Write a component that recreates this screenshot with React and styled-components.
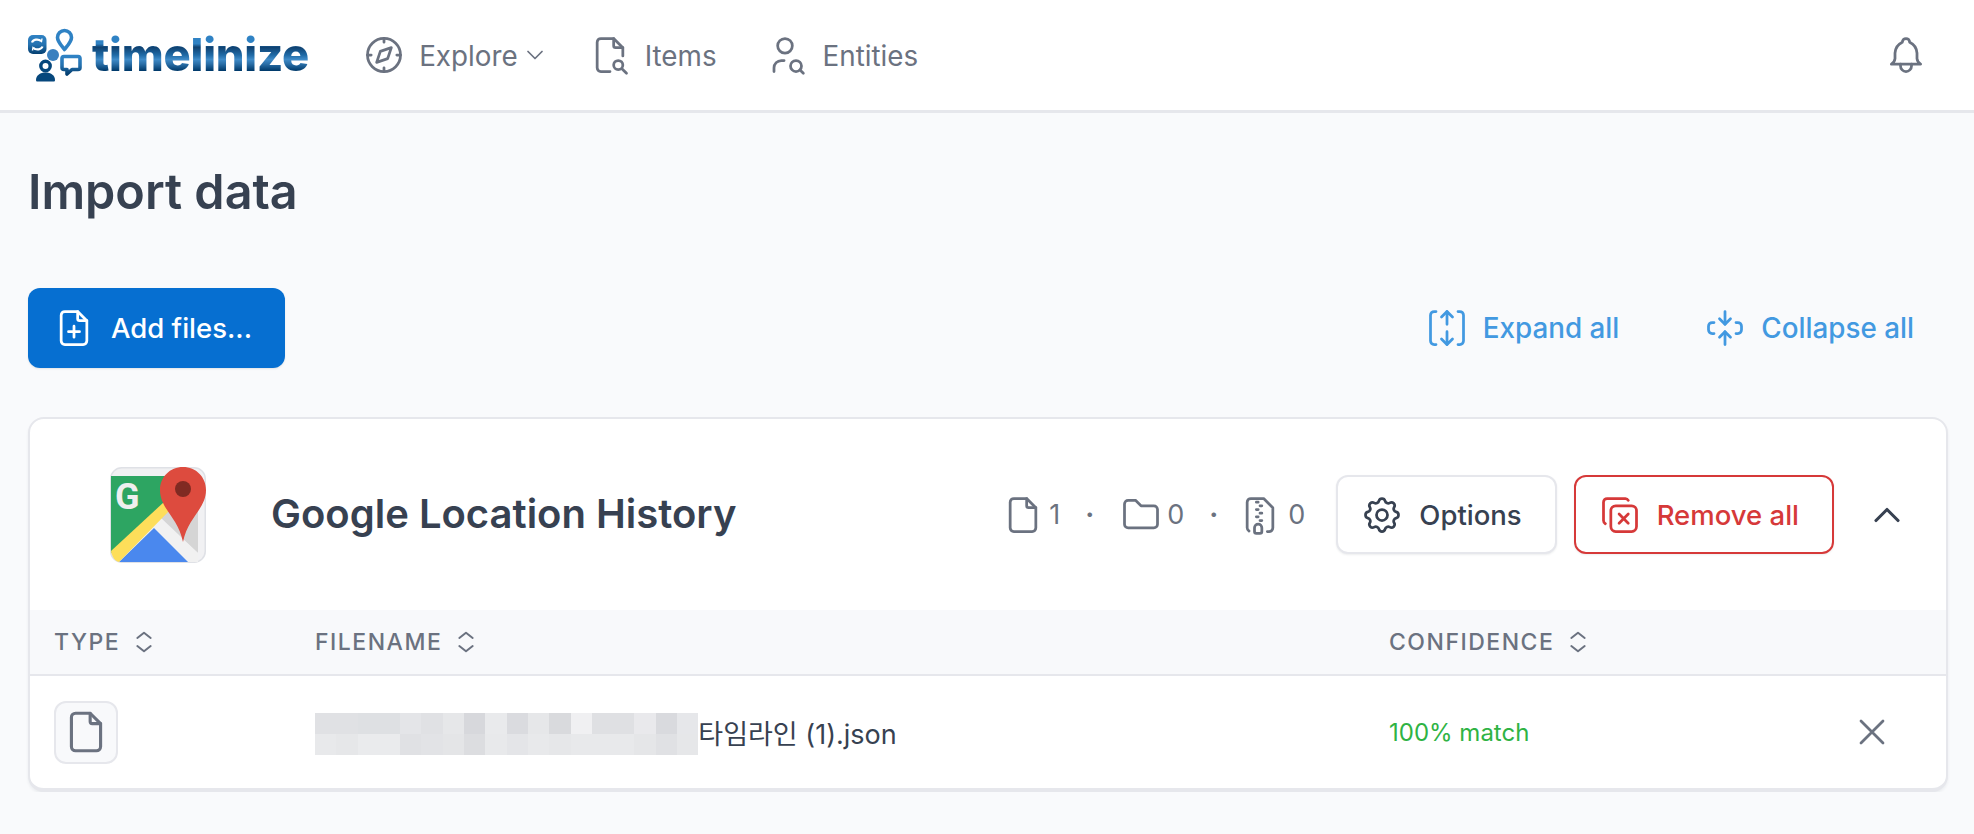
import React from "react";
import styled, { createGlobalStyle } from "styled-components";

const Icon = ({ size = 44, width = 1.5, children }) => (
    <IconSvg viewBox="0 0 24 24" $size={size} fill="none" stroke="currentColor" strokeWidth={width} strokeLinecap="round" strokeLinejoin="round">
        {children}
    </IconSvg>
);

const FileIcon = (props) => (
    <Icon {...props}>
        <path d="M14 3v4a1 1 0 0 0 1 1h4" />
        <path d="M17 21h-10a2 2 0 0 1 -2 -2v-14a2 2 0 0 1 2 -2h7l5 5v11a2 2 0 0 1 -2 2z" />
    </Icon>
);

const SortIcon = () => (
    <Icon size={32}>
        <path d="M7 9l5 -4l5 4" />
        <path d="M17 15l-5 4l-5 -4" />
    </Icon>
);

const LogoMark = () => (
    <svg width="54" height="56" viewBox="0 0 54 56" fill="none" style={{ flexShrink: 0 }}>
        <defs>
            <linearGradient id="markFill" x1="0" y1="0" x2="0" y2="1">
                <stop offset="0" stopColor="#2f82c4" />
                <stop offset="0.5" stopColor="#2572b0" />
                <stop offset="1" stopColor="#043f70" />
            </linearGradient>
        </defs>
        <rect x="0" y="8" width="18.500" height="19" rx="5" fill="url(#markFill)" />
        <path d="M4 15.500c1-3 6-4 9-1.500M14.500 19.500c-1 3-6 4-9 1.500" stroke="#fff" strokeWidth="2.200" />
        <path d="M11 12.500l2.500 2 .5-3M7.500 22.500l-2.500-2-.5 3" stroke="#fff" strokeWidth="1.400" />
        <path d="M36.500 22.500c-4-5-7-8-7-12a7 7 0 0 1 14 0c0 4-3 7-7 12z" stroke="#2f82c4" strokeWidth="3.600" strokeLinejoin="round" />
        <circle cx="25" cy="28" r="6" fill="#3a80bf" />
        <path d="M36 29.500h14a2 2 0 0 1 2 2v9a2 2 0 0 1-2 2h-6l-5 4.500v-4.500h-3a2 2 0 0 1-2-2v-9a2 2 0 0 1 2-2z" stroke="url(#markFill)" strokeWidth="3.600" strokeLinejoin="round" />
        <circle cx="17.500" cy="39" r="4.700" stroke="#06477c" strokeWidth="3.400" />
        <path d="M8 53c0-5 4.500-7.500 9.500-7.500s9.500 2.500 9.500 7.500c0 1-.5 1.500-1.500 1.500h-16c-1 0-1.500-.5-1.500-1.500z" fill="#06477c" />
    </svg>
);

const MapsLogo = () => (
    <svg width="96" height="96" viewBox="0 0 96 96" style={{ flexShrink: 0 }}>
        <rect x="0.75" y="0.75" width="94.500" height="94.500" rx="11" fill="#f1f1f3" stroke="#dfe1e6" strokeWidth="1.5" />
        <path d="M1 9H55V36L1 86z" fill="#2da562" />
        <text x="5" y="42" fontFamily="Roboto, sans-serif" fontWeight="700" fontSize="36" fill="#efefef">G</text>
        <path d="M60 38H88V86L50 50z" fill="#d5d5d5" />
        <path d="M48 50L88 86V95H78L42 60z" fill="#f1f1f1" />
        <path d="M44 61L78 95H9z" fill="#4a88ee" />
        <path d="M1 84L54 35L61 42L9 95C5 94 2 90 1 84z" fill="#fdde5a" />
        <path d="M73 0C60 0 50 10 50 23C50 42 68 50 73 75C78 50 96 42 96 23C96 10 86 0 73 0z" fill="#dd4b3e" />
        <circle cx="73" cy="22" r="8" fill="#802a22" />
    </svg>
);

const mosaic = [
    ["#e0e1e4", "#e8e9eb"], ["#e0e1e4", "#e6e7e9"], ["#dee0e3", "#eaebed"], ["#dee0e3", "#eaebed"],
    ["#e4e5e8", "#e0e1e4"], ["#e0e1e4", "#e2e3e6"], ["#e6e7e9", "#e4e5e7"], ["#d7d8dc", "#dcdde0"],
    ["#e9eaec", "#e8e9eb"], ["#dadbdf", "#e4e5e8"], ["#e6e7e9", "#e8e9eb"], ["#d9dadd", "#e6e7e9"],
    ["#f0f0f2", "#e8e9eb"], ["#dfe0e3", "#e8e9eb"], ["#dfe0e3", "#e8e9eb"], ["#e9e9ec", "#e5e6e8"],
    ["#d9dade", "#e0e1e4"], ["#e6e7ea", "#e6e7e9"],
];

const App = () => {
    return (
        <>
            <GlobalStyle />
            <Header>
                <Brand>
                    <LogoMark />
                    <Wordmark>timelinize</Wordmark>
                </Brand>
                <Nav>
                    <NavItem>
                        <Icon>
                            <path d="M8 16l2 -6l6 -2l-2 6l-6 2" />
                            <path d="M12 12m-9 0a9 9 0 1 0 18 0a9 9 0 1 0 -18 0" />
                            <path d="M12 3v2M12 19v2M3 12h2M19 12h2" />
                        </Icon>
                        <span>Explore</span>
                        <Caret>
                            <Icon size={28}><path d="M6 9l6 6l6 -6" /></Icon>
                        </Caret>
                    </NavItem>
                    <NavItem>
                        <Icon>
                            <path d="M14 3v4a1 1 0 0 0 1 1h4" />
                            <path d="M12 21h-5a2 2 0 0 1 -2 -2v-14a2 2 0 0 1 2 -2h7l5 5v4.500" />
                            <path d="M16.500 17.500m-2.500 0a2.500 2.500 0 1 0 5 0a2.500 2.500 0 1 0 -5 0" />
                            <path d="M18.500 19.500l2.500 2.500" />
                        </Icon>
                        <span>Items</span>
                    </NavItem>
                    <NavItem $wide>
                        <Icon>
                            <path d="M8 7a4 4 0 1 0 8 0a4 4 0 0 0 -8 0" />
                            <path d="M6 21v-2a4 4 0 0 1 4 -4h1.500" />
                            <path d="M18 18m-3 0a3 3 0 1 0 6 0a3 3 0 1 0 -6 0" />
                            <path d="M20.200 20.200l1.800 1.800" />
                        </Icon>
                        <span>Entities</span>
                    </NavItem>
                </Nav>
                <Bell>
                    <Icon>
                        <path d="M10 5a2 2 0 1 1 4 0a7 7 0 0 1 4 6v3a4 4 0 0 0 2 3h-16a4 4 0 0 0 2 -3v-3a7 7 0 0 1 4 -6" />
                        <path d="M9 17v1a3 3 0 0 0 6 0v-1" />
                    </Icon>
                </Bell>
            </Header>

            <Main>
                <Title>Import data</Title>

                <Toolbar>
                    <PrimaryButton>
                        <Icon>
                            <path d="M14 3v4a1 1 0 0 0 1 1h4" />
                            <path d="M17 21h-10a2 2 0 0 1 -2 -2v-14a2 2 0 0 1 2 -2h7l5 5v11a2 2 0 0 1 -2 2z" />
                            <path d="M12 11v6M9 14h6" />
                        </Icon>
                        Add files...
                    </PrimaryButton>
                    <LinkGroup>
                        <LinkButton>
                            <Icon>
                                <path d="M12 10v-7l3 3" />
                                <path d="M9 6l3 -3" />
                                <path d="M12 14v7l3 -3" />
                                <path d="M9 18l3 3" />
                                <path d="M18 3h1a2 2 0 0 1 2 2v14a2 2 0 0 1 -2 2h-1" />
                                <path d="M6 3h-1a2 2 0 0 0 -2 2v14a2 2 0 0 0 2 2h1" />
                            </Icon>
                            Expand all
                        </LinkButton>
                        <LinkButton>
                            <Icon>
                                <path d="M12 3v7l3 -3" />
                                <path d="M9 7l3 3" />
                                <path d="M12 21v-7l3 3" />
                                <path d="M9 17l3 -3" />
                                <path d="M18 9h1a2 2 0 0 1 2 2v2a2 2 0 0 1 -2 2h-1" />
                                <path d="M6 9h-1a2 2 0 0 0 -2 2v2a2 2 0 0 0 2 2h1" />
                            </Icon>
                            Collapse all
                        </LinkButton>
                    </LinkGroup>
                </Toolbar>

                <Card>
                    <CardHeader>
                        <MapsLogo />
                        <CardTitle>Google Location History</CardTitle>
                        <Stats>
                            <Stat $gap={4}>
                                <FileIcon />
                                <span>1</span>
                            </Stat>
                            <Dot>·</Dot>
                            <Stat $gap={4}>
                                <Icon>
                                    <path d="M5 4h4l3 3h7a2 2 0 0 1 2 2v8a2 2 0 0 1 -2 2h-14a2 2 0 0 1 -2 -2v-11a2 2 0 0 1 2 -2" />
                                </Icon>
                                <span>0</span>
                            </Stat>
                            <Dot>·</Dot>
                            <Stat $pull={5}>
                                <Icon>
                                    <path d="M6 20.735a2 2 0 0 1 -1 -1.735v-14a2 2 0 0 1 2 -2h7l5 5v11a2 2 0 0 1 -2 2h-1" />
                                    <path d="M11 17a2 2 0 0 1 2 2v2a1 1 0 0 1 -1 1h-2a1 1 0 0 1 -1 -1v-2a2 2 0 0 1 2 -2z" />
                                    <path d="M11 5h-1M13 7h-1M11 9h-1M13 11h-1M11 13h-1M13 15h-1" />
                                </Icon>
                                <span>0</span>
                            </Stat>
                        </Stats>
                        <OutlineButton>
                            <Icon>
                                <path d="M10.325 4.317c.426 -1.756 2.924 -1.756 3.350 0a1.724 1.724 0 0 0 2.573 1.066c1.543 -.94 3.310 .826 2.370 2.370a1.724 1.724 0 0 0 1.065 2.572c1.756 .426 1.756 2.924 0 3.350a1.724 1.724 0 0 0 -1.066 2.573c.94 1.543 -.826 3.310 -2.370 2.370a1.724 1.724 0 0 0 -2.572 1.065c-.426 1.756 -2.924 1.756 -3.350 0a1.724 1.724 0 0 0 -2.573 -1.066c-1.543 .94 -3.310 -.826 -2.370 -2.370a1.724 1.724 0 0 0 -1.065 -2.572c-1.756 -.426 -1.756 -2.924 0 -3.350a1.724 1.724 0 0 0 1.066 -2.573c-.94 -1.543 .826 -3.310 2.370 -2.370c1 .608 2.296 .07 2.572 -1.065z" />
                                <path d="M9 12a3 3 0 1 0 6 0a3 3 0 0 0 -6 0" />
                            </Icon>
                            Options
                        </OutlineButton>
                        <DangerButton>
                            <Icon>
                                <path d="M7 9.667a2.667 2.667 0 0 1 2.667 -2.667h8.666a2.667 2.667 0 0 1 2.667 2.667v8.666a2.667 2.667 0 0 1 -2.667 2.667h-8.666a2.667 2.667 0 0 1 -2.667 -2.667z" />
                                <path d="M4.012 16.737a2 2 0 0 1 -1.012 -1.737v-10c0 -1.100 .9 -2 2 -2h10c.75 0 1.158 .385 1.500 1" />
                                <path d="M11.500 11.500l4.993 4.993" />
                                <path d="M16.500 11.500l-5 5" />
                            </Icon>
                            Remove all
                        </DangerButton>
                        <Toggle>
                            <Icon size={44} width={1.7}><path d="M6 15l6 -6l6 6" /></Icon>
                        </Toggle>
                    </CardHeader>

                    <TableHead>
                        <HeadCell>TYPE <SortIcon /></HeadCell>
                        <HeadCell>FILENAME <SortIcon /></HeadCell>
                        <HeadCell>CONFIDENCE <SortIcon /></HeadCell>
                    </TableHead>

                    <TableRow>
                        <TypeBadge>
                            <FileIcon size={50} />
                        </TypeBadge>
                        <FileName>
                            <Mosaic>
                                {mosaic.map((pair, i) => <Pixel key={i} $shade={pair[0]} />)}
                                {mosaic.map((pair, i) => <Pixel key={i} $shade={pair[1]} />)}
                            </Mosaic>
                            타임라인 (1).json
                        </FileName>
                        <Confidence>100% match</Confidence>
                        <RemoveRow>
                            <Icon size={44} width={1.5}><path d="M18 6l-12 12M6 6l12 12" /></Icon>
                        </RemoveRow>
                    </TableRow>
                </Card>
            </Main>
        </>
    );
};

export default App;

const GlobalStyle = createGlobalStyle`
    html, body {
        margin: 0;
        background: #f9fafc;
        font-family: Inter, "Noto Sans CJK KR", sans-serif;
        color: #374151;
    }
`;

const IconSvg = styled.svg`
    width: ${props => props.$size}px;
    height: ${props => props.$size}px;
    flex-shrink: 0;
`;

const Header = styled.header`
    height: 110px;
    display: flex;
    align-items: center;
    padding: 0 46px 0 28px;
    background: #fff;
    border-bottom: 3px solid #e6e7ec;
`;

const Brand = styled.div`
    display: flex;
    align-items: center;
    gap: 10px;
    height: 56px;
`;

const Wordmark = styled.div`
    font-family: Inter, sans-serif;
    font-weight: 800;
    font-size: 45.3px;
    line-height: 56px;
    letter-spacing: -0.2px;
    background: linear-gradient(180deg, #2f82c4 0 30%, #0f4170 36%, #1f6aa6 50%, #3f8bc8 58%, #2a6fa8 66%, #003a6b 78%);
    -webkit-background-clip: text;
    background-clip: text;
    color: transparent;
`;

const Nav = styled.nav`
    display: flex;
    align-items: center;
    gap: 39px;
    margin-left: 53px;
`;

const NavItem = styled.div`
    display: flex;
    align-items: center;
    gap: ${props => (props.$wide ? 16 : 13)}px;
    margin-left: ${props => (props.$wide ? 7 : 0)}px;
    font-size: 27.8px;
    color: #6b7280;

    & > span:not([class]) {
        padding-top: 2px;
    }
`;

const Caret = styled.span`
    display: flex;
    margin-left: -10px;
`;

const Bell = styled.div`
    display: flex;
    margin-left: auto;
    color: #6b7280;
`;

const Main = styled.main`
    padding: 0 26px 0 28px;
`;

const Title = styled.h1`
    margin: 0;
    padding-top: 50px;
    font-size: 48.5px;
    line-height: 58px;
    font-weight: 600;
    color: #374151;
`;

const Toolbar = styled.div`
    display: flex;
    align-items: center;
    justify-content: space-between;
    margin-top: 67px;
    padding-right: 34px;
`;

const PrimaryButton = styled.button`
    display: flex;
    align-items: center;
    gap: 15px;
    height: 80px;
    padding: 0 33px 0 24px;
    border: none;
    border-radius: 12px;
    background: #066fd1;
    color: #fff;
    font: 500 27.5px Inter, sans-serif;
    box-shadow: 0 1px 2px rgba(24, 36, 51, 0.1);
`;

const LinkGroup = styled.div`
    display: flex;
    align-items: center;
    gap: 84px;
`;

const LinkButton = styled.div`
    display: flex;
    align-items: center;
    gap: 14px;
    font-size: 27.8px;
    font-weight: 500;
    color: #4299e1;
`;

const Card = styled.section`
    margin-top: 49px;
    background: #fff;
    border: 2px solid #e6e7ec;
    border-bottom-width: 4px;
    border-radius: 16px;
    box-shadow: 0 2px 3px rgba(24, 36, 51, 0.06);
    overflow: hidden;
`;

const CardHeader = styled.div`
    display: flex;
    align-items: center;
    height: 191px;
    padding: 0 37px 0 80px;
`;

const CardTitle = styled.h2`
    margin: 0 0 2px 65px;
    font-size: 40px;
    font-weight: 600;
    color: #374151;
`;

const Stats = styled.div`
    display: flex;
    align-items: center;
    gap: 25px;
    margin-left: auto;
    font-size: 27px;
    color: #6b7280;
`;

const Stat = styled.div`
    display: flex;
    align-items: center;
    gap: ${props => props.$gap ?? 6}px;
    margin-left: ${props => -(props.$pull ?? 0)}px;
`;

const Dot = styled.span`
    font-weight: 700;
`;

const OutlineButton = styled.button`
    display: flex;
    align-items: center;
    gap: 15px;
    height: 79px;
    margin-left: 31px;
    padding: 0 33px 0 22px;
    background: #fff;
    border: 2px solid #e6e7ec;
    border-radius: 12px;
    color: #374151;
    font: 500 27.5px Inter, sans-serif;
    box-shadow: 0 1px 2px rgba(24, 36, 51, 0.08);
`;

const DangerButton = styled(OutlineButton)`
    margin-left: 17px;
    padding: 0 33px 0 22px;
    border-color: #d63939;
    color: #d63939;
`;

const Toggle = styled.div`
    display: flex;
    margin-left: 31px;
    color: #374151;
`;

const TableHead = styled.div`
    display: grid;
    grid-template-columns: 261px 1074px 1fr;
    align-items: center;
    height: 64px;
    padding-left: 24px;
    background: #f8f9fb;
    border-bottom: 2px solid #e6e7ec;
`;

const HeadCell = styled.div`
    display: flex;
    align-items: center;
    gap: 8px;
    font-size: 23px;
    font-weight: 500;
    letter-spacing: 1.5px;
    color: #6b7280;
`;

const TableRow = styled.div`
    display: grid;
    grid-template-columns: 261px 1074px 1fr auto;
    align-items: center;
    height: 112px;
    padding: 0 52px 0 24px;
`;

const TypeBadge = styled.div`
    display: flex;
    align-items: center;
    justify-content: center;
    width: 64px;
    height: 63px;
    box-sizing: border-box;
    border: 2px solid #e6e7ec;
    border-radius: 12px;
    background: #f8f9fb;
    color: #6b7280;
`;

const FileName = styled.div`
    display: flex;
    align-items: center;
    font-size: 27px;
    color: #374151;
`;

const Mosaic = styled.div`
    display: grid;
    grid-template-columns: repeat(18, 21.3px);
    grid-auto-rows: 21px;
    margin-top: 4px;
`;

const Pixel = styled.i`
    background: ${props => props.$shade};
`;

const Confidence = styled.div`
    font-size: 24px;
    color: #2fb344;
`;

const RemoveRow = styled.div`
    display: flex;
    color: #6b7280;
`;
